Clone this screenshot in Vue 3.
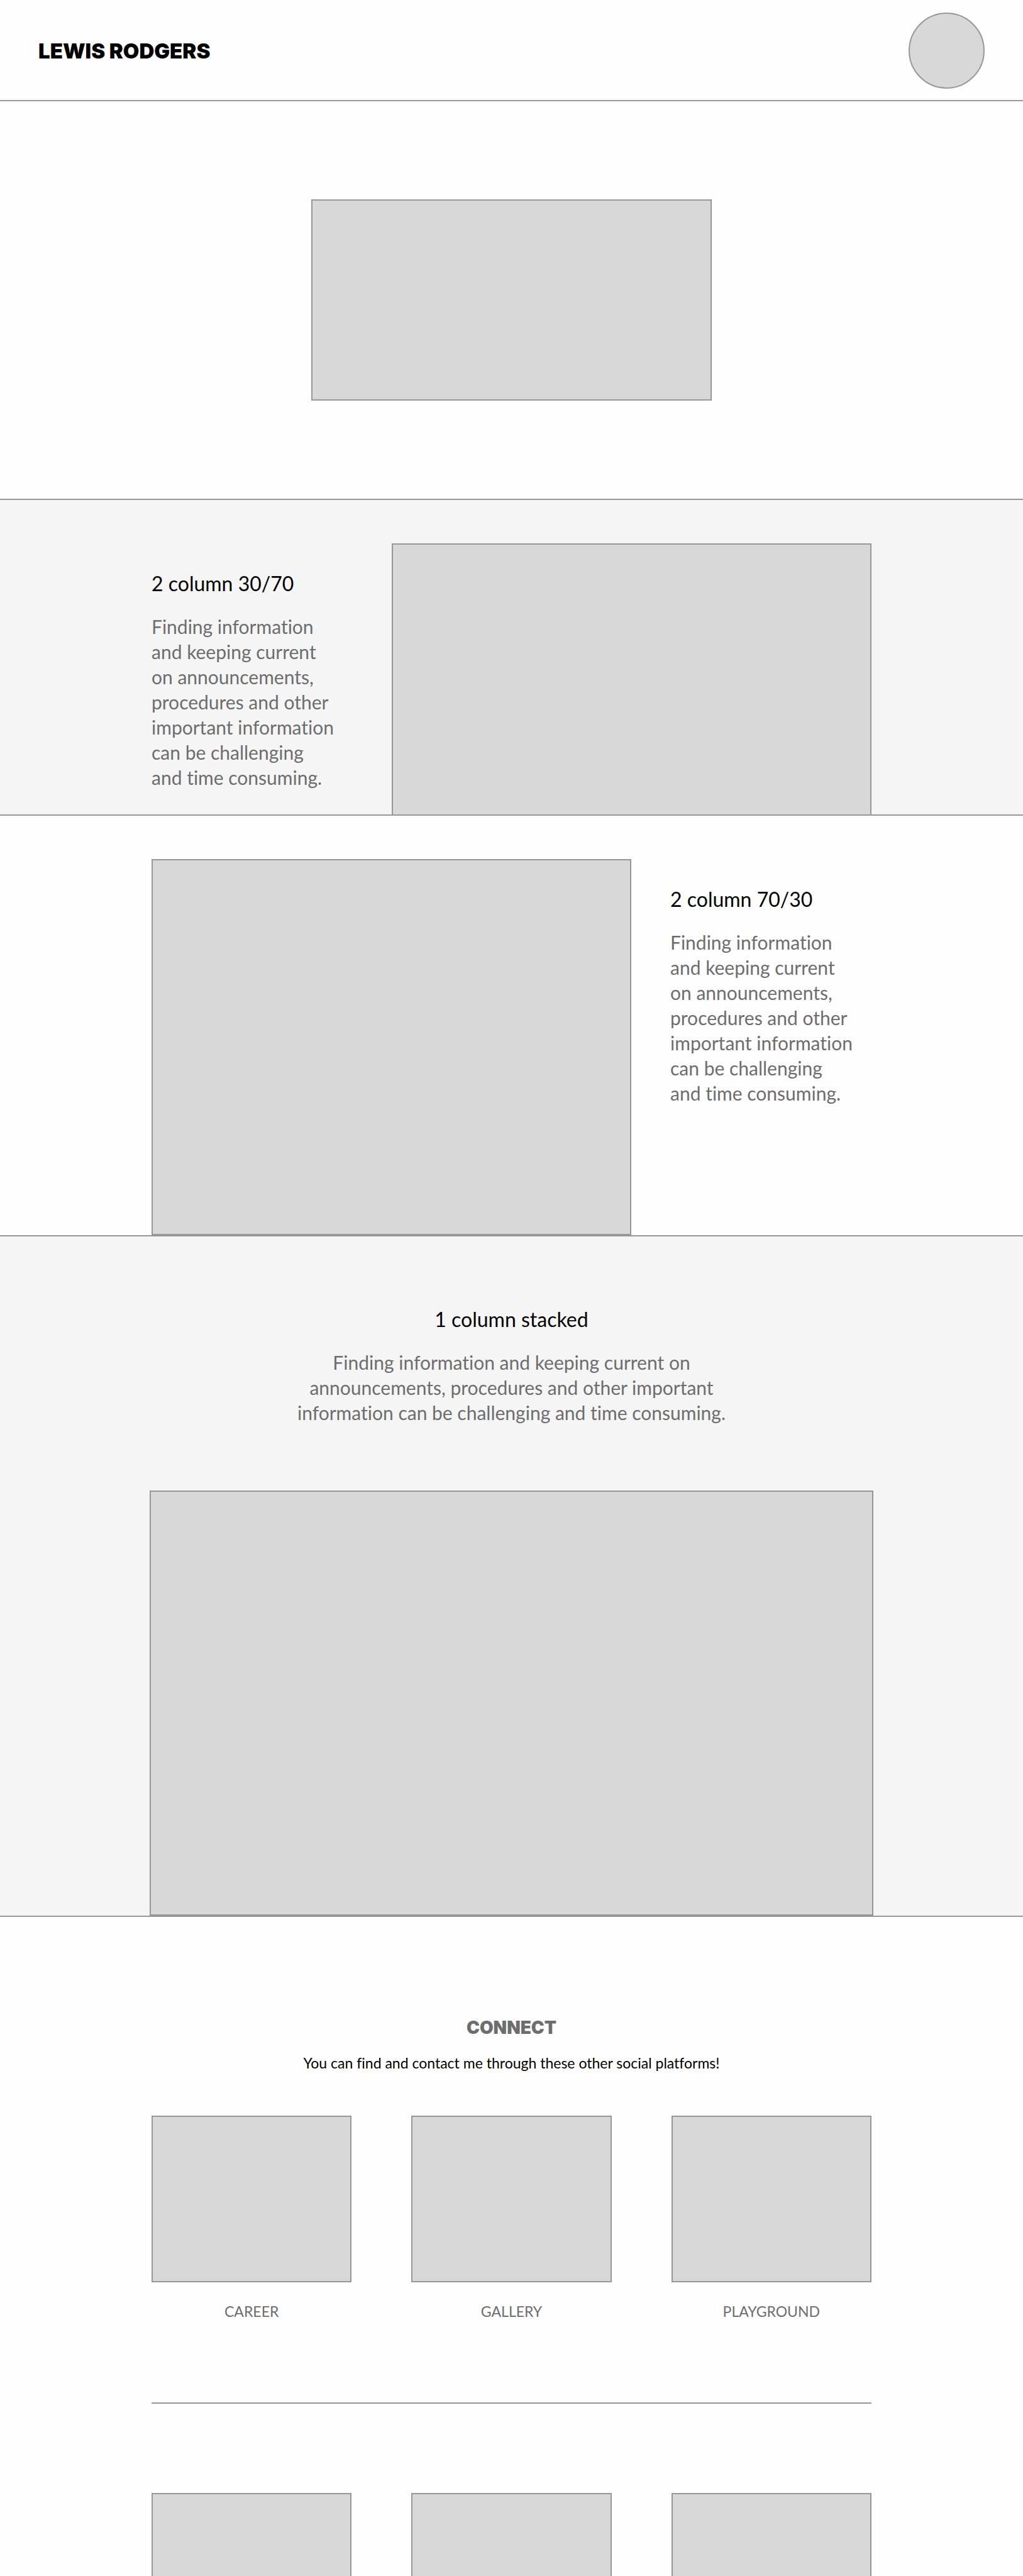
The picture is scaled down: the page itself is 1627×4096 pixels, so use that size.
<script setup>
const blurb =
  'Finding information and keeping current on announcements, procedures and other important information can be challenging and time consuming.'
const platforms = ['CAREER', 'GALLERY', 'PLAYGROUND']
</script>

<template>
  <div class="page">
    <header class="masthead">
      <a class="brand" href="#">LEWIS RODGERS</a>
      <div class="avatar"></div>
    </header>

    <main>
      <section class="hero">
        <div class="box hero-box"></div>
      </section>

      <section class="band shaded">
        <div class="container split">
          <div class="copy">
            <h2>2 column 30/70</h2>
            <p>{{ blurb }}</p>
          </div>
          <div class="box media bleed"></div>
        </div>
      </section>

      <section class="band">
        <div class="container split">
          <div class="box media tall"></div>
          <div class="copy">
            <h2>2 column 70/30</h2>
            <p>{{ blurb }}</p>
          </div>
        </div>
      </section>

      <section class="band shaded">
        <div class="container stacked">
          <div class="intro">
            <h2>1 column stacked</h2>
            <p>{{ blurb }}</p>
          </div>
          <div class="box wide"></div>
        </div>
      </section>

      <section class="connect container">
        <h3>CONNECT</h3>
        <p class="lead">You can find and contact me through these other social platforms!</p>
        <div class="cards">
          <a v-for="name in platforms" :key="name" class="card" href="#">
            <span class="box thumb"></span>
            <span class="label">{{ name }}</span>
          </a>
        </div>
        <hr />
        <div class="cards">
          <div v-for="name in platforms" :key="name" class="box thumb cut"></div>
        </div>
      </section>
    </main>
  </div>
</template>

<style>
body {
  margin: 0;
  background: #fefefe;
}
</style>

<style scoped>
.page {
  font-family: Lato, 'Open Sans', sans-serif;
  font-weight: 400;
  font-variant-ligatures: none;
  color: #000;
}
.page * {
  box-sizing: border-box;
}
h2,
h3,
p {
  margin: 0;
}
.masthead {
  display: flex;
  align-items: center;
  justify-content: space-between;
  padding: 20px 61px 18px;
  border-bottom: 2px solid #979797;
}
.brand {
  color: #000;
  font-family: Inter, Lato, sans-serif;
  font-size: 33px;
  line-height: 40px;
  font-weight: 900;
  text-decoration: none;
}
.avatar {
  width: 121px;
  height: 121px;
  border: 2px solid #979797;
  border-radius: 50%;
  background: #d8d8d8;
}
.box {
  display: block;
  border: 2px solid #979797;
  background: #d8d8d8;
}
.hero {
  padding: 156px 0;
  border-bottom: 2px solid #979797;
}
.hero-box {
  max-width: 637px;
  height: 320px;
  margin: 0 auto;
}
.container {
  max-width: 1145px;
  margin: 0 auto;
}
.band {
  border-bottom: 2px solid #979797;
}
.shaded {
  background: #f5f5f5;
}
.split {
  display: flex;
  justify-content: space-between;
  padding-top: 69px;
}
.copy {
  width: 320px;
  padding: 44px 28px 0 0;
}
h2 {
  font-size: 32px;
  line-height: 40px;
  font-weight: 400;
}
h2 + p {
  margin-top: 28px;
  color: #6d6d6d;
  font-size: 30px;
  line-height: 40px;
}
.media {
  width: 763px;
}
.bleed {
  height: 431px;
  border-bottom: 0;
}
.tall {
  height: 598px;
}
.stacked {
  padding-top: 112px;
}
.intro {
  max-width: 720px;
  margin: 0 auto;
  text-align: center;
}
.wide {
  height: 676px;
  margin: 104px -3px 0;
}
.connect {
  padding-top: 156px;
  text-align: center;
}
h3 {
  color: #6d6d6d;
  font-family: Inter, Lato, sans-serif;
  font-size: 28px;
  line-height: 40px;
  font-weight: 900;
}
.lead {
  margin-top: 20px;
  font-size: 23px;
  line-height: 32px;
}
.cards {
  display: grid;
  grid-template-columns: repeat(3, 1fr);
  gap: 95px;
  margin-top: 68px;
}
.card {
  color: #6d6d6d;
  font-size: 23px;
  line-height: 32px;
  text-decoration: none;
}
.thumb {
  height: 265px;
}
.label {
  display: block;
  margin-top: 30px;
}
hr {
  height: 2px;
  margin: 129px 0 0;
  border: 0;
  background: #979797;
}
hr + .cards {
  margin-top: 142px;
}
.cut {
  height: 132px;
  border-bottom: 0;
}
</style>
